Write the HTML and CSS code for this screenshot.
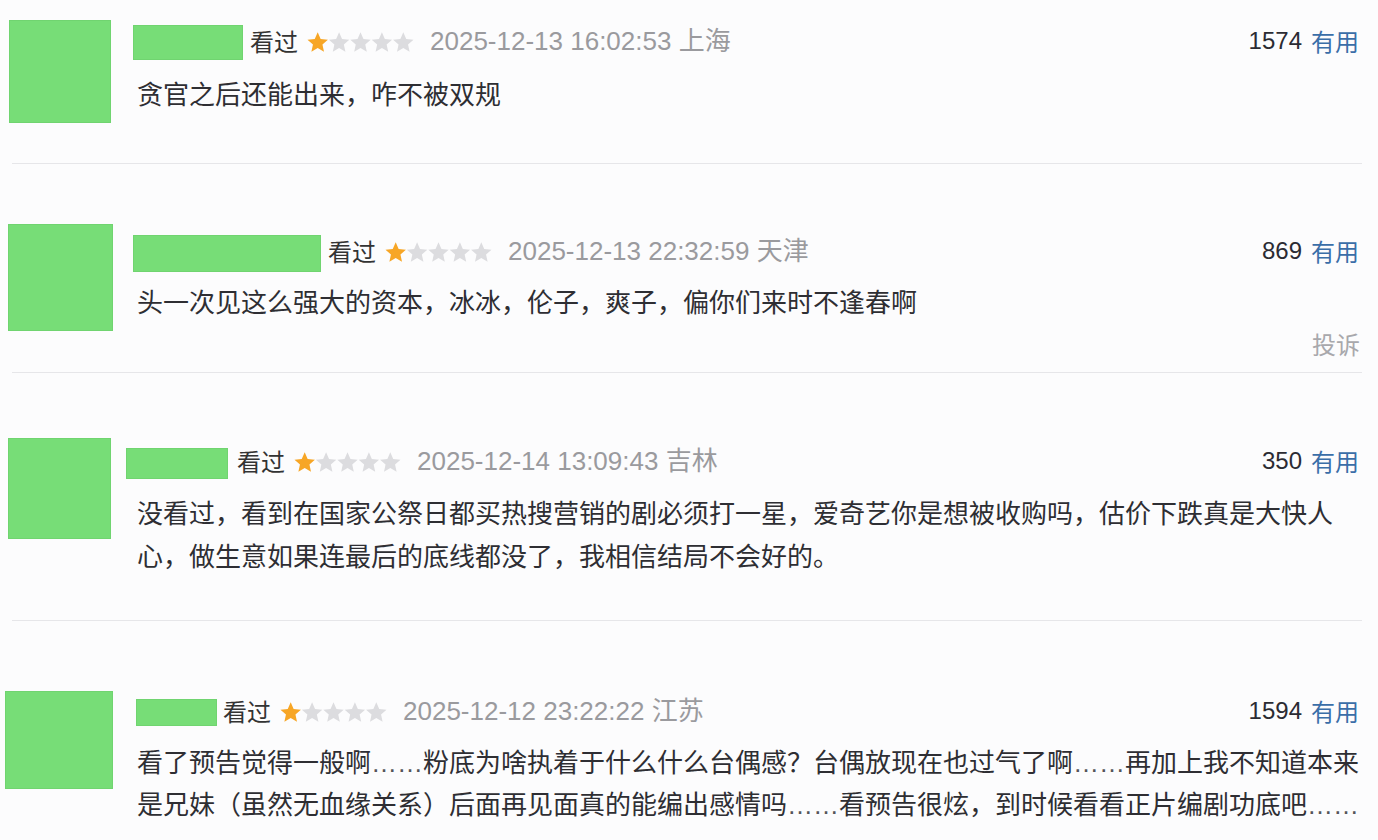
FILE: index.html
```html
<!DOCTYPE html>
<html lang="zh-CN">
<head>
<meta charset="utf-8">
<title>短评</title>
<link rel="stylesheet" href="styles.css">
</head>
<body>
<svg width="0" height="0" class="defs" aria-hidden="true">
  <defs>
    <path id="star" d="M10.7 .3 L13.64 6.95 L20.9 7.7 L15.45 12.55 L17.0 19.7 L10.7 16.0 L4.4 19.7 L5.95 12.55 L.5 7.7 L7.76 6.95Z"/>
  </defs>
</svg>
<div class="list">

  <div class="item item-1">
    <div class="avatar"></div>
    <div class="body">
      <div class="head">
        <span class="mask" style="width:110px;height:35px"></span>
        <span class="seen">看过</span>
        <svg class="stars" viewBox="0 0 107 20" width="107" height="20"><use href="#star" class="on"/><use href="#star" x="21.4" class="off"/><use href="#star" x="42.8" class="off"/><use href="#star" x="64.2" class="off"/><use href="#star" x="85.6" class="off"/></svg>
        <span class="time">2025-12-13 16:02:53 上海</span>
        <span class="votes"><span class="count">1574</span><span class="useful">有用</span></span>
      </div>
      <p class="text">贪官之后还能出来，咋不被双规</p>
    </div>
  </div>
  <hr class="divider">

  <div class="item item-2">
    <div class="avatar"></div>
    <div class="body">
      <div class="head">
        <span class="mask" style="width:188px;height:37px"></span>
        <span class="seen">看过</span>
        <svg class="stars" viewBox="0 0 107 20" width="107" height="20"><use href="#star" class="on"/><use href="#star" x="21.4" class="off"/><use href="#star" x="42.8" class="off"/><use href="#star" x="64.2" class="off"/><use href="#star" x="85.6" class="off"/></svg>
        <span class="time">2025-12-13 22:32:59 天津</span>
        <span class="votes"><span class="count">869</span><span class="useful">有用</span></span>
      </div>
      <p class="text">头一次见这么强大的资本，冰冰，伦子，爽子，偏你们来时不逢春啊</p>
      <div class="report">投诉</div>
    </div>
  </div>
  <hr class="divider">

  <div class="item item-3">
    <div class="avatar"></div>
    <div class="body">
      <div class="head">
        <span class="mask" style="width:102px;height:31px"></span>
        <span class="seen">看过</span>
        <svg class="stars" viewBox="0 0 107 20" width="107" height="20"><use href="#star" class="on"/><use href="#star" x="21.4" class="off"/><use href="#star" x="42.8" class="off"/><use href="#star" x="64.2" class="off"/><use href="#star" x="85.6" class="off"/></svg>
        <span class="time">2025-12-14 13:09:43 吉林</span>
        <span class="votes"><span class="count">350</span><span class="useful">有用</span></span>
      </div>
      <p class="text"><span>没看过，看到在国家公祭日都买热搜营销的剧必须打一星，爱奇艺你是想被收购吗，估价下跌真是大快人</span><span>心，做生意如果连最后的底线都没了，我相信结局不会好的。</span></p>
    </div>
  </div>
  <hr class="divider">

  <div class="item item-4">
    <div class="avatar"></div>
    <div class="body">
      <div class="head">
        <span class="mask" style="width:81px;height:27px"></span>
        <span class="seen">看过</span>
        <svg class="stars" viewBox="0 0 107 20" width="107" height="20"><use href="#star" class="on"/><use href="#star" x="21.4" class="off"/><use href="#star" x="42.8" class="off"/><use href="#star" x="64.2" class="off"/><use href="#star" x="85.6" class="off"/></svg>
        <span class="time">2025-12-12 23:22:22 江苏</span>
        <span class="votes"><span class="count">1594</span><span class="useful">有用</span></span>
      </div>
      <p class="text"><span>看了预告觉得一般啊</span><span class="ell">……</span><span>粉底为啥执着于什么什么台偶感？台偶放现在也过气了啊</span><span class="ell">……</span><span>再加上我不知道本来</span><span>是兄妹（虽然无血缘关系）后面再见面真的能编出感情吗</span><span class="ell">……</span><span>看预告很炫，到时候看看正片编剧功底吧</span><span class="ell">……</span></p>
    </div>
  </div>

</div>
</body>
</html>
```

FILE: styles.css
```css
* { box-sizing: border-box; }

html, body {
  margin: 0;
  padding: 0;
  background: #fcfcfd;
}

body {
  width: 1378px;
  height: 840px;
  overflow: hidden;
  font-family: "Noto Sans CJK SC", "Noto Sans", sans-serif;
  color: #333;
}

.defs { position: absolute; width: 0; height: 0; }

.list {
  padding-right: 16px;
}

.item {
  display: grid;
  grid-template-columns: 137px 1fr;
  align-items: start;
}

.avatar {
  background: #77dd77;
  box-shadow: inset 0 0 0 1px #70d470;
}

.body {
  min-width: 0;
}

.head {
  display: flex;
  align-items: center;
  height: 36px;
  white-space: nowrap;
}

.mask {
  display: block;
  flex: none;
  background: #77dd77;
  box-shadow: inset 0 0 0 1px #70d470;
  margin-top: 4px;
}

.seen {
  margin-left: 7px;
  font-size: 24px;
  line-height: 36px;
  color: #333;
}

.stars {
  display: block;
  flex: none;
  margin-left: 9px;
  margin-top: 2px;
}

.stars .on { fill: #f7a626; }
.stars .off { fill: #dcdcdf; }

.time {
  margin-left: 16px;
  font-family: "Liberation Sans", "Noto Sans CJK SC", sans-serif;
  font-size: 26px;
  line-height: 36px;
  color: #9a9a9e;
}

.votes {
  margin-left: auto;
  margin-right: 3px;
  display: flex;
  align-items: center;
  gap: 9px;
}

.count {
  font-family: "Liberation Sans", sans-serif;
  font-size: 24px;
  line-height: 36px;
  color: #2b2b33;
}

.useful {
  font-size: 24px;
  line-height: 36px;
  color: #3a6ea8;
}

.text {
  margin: 0;
  font-size: 26px;
  line-height: 40px;
  color: #2e2e33;
}

.ell {
  font-family: "Liberation Sans", sans-serif;
  color: #55555a;
}

.report {
  margin-top: 5px;
  margin-right: 2px;
  text-align: right;
  font-size: 24px;
  line-height: 36px;
  color: #a8a8ac;
}

.divider {
  margin: 0 0 0 12px;
  border: none;
  height: 1px;
  background: #e6e6e9;
}

/* per-comment offsets */
.item-1 { padding-top: 20px; padding-bottom: 40px; }
.item-1 .avatar { margin-left: 9px; width: 102px; height: 103px; }
.item-1 .body { padding-top: 2.5px; }
.item-1 .text { margin-top: 14px; }
.item-1 .mask { margin-left: -4px; }

.item-2 { padding-top: 60px; padding-bottom: 10px; }
.item-2 .avatar { margin-left: 8px; width: 105px; height: 107px; }
.item-2 .body { padding-top: 9px; }
.item-2 .mask { margin-left: -4px; }
.item-2 .text { margin-top: 12px; }

.item-3 { padding-top: 65px; padding-bottom: 44px; }
.item-3 .avatar { margin-left: 8px; width: 103px; height: 101px; }
.item-3 .body { padding-top: 5px; }
.item-3 .mask { margin-left: -11px; }
.item-3 .seen { margin-left: 9px; }
.item-3 .text { margin-top: 11px; line-height: 43px; }

.item-4 { padding-top: 70px; }
.item-4 .avatar { margin-left: 5px; width: 108px; height: 98px; }
.item-4 .body { padding-top: 1.5px; }
.item-4 .mask { margin-left: -1px; }
.item-4 .seen { margin-left: 6px; }
.item-4 .text { margin-top: 12.5px; }
```
